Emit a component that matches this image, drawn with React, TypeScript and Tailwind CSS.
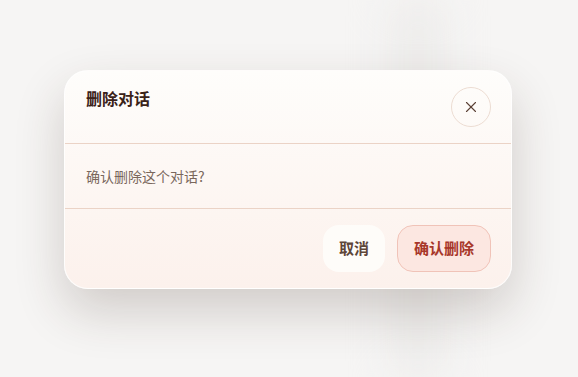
import { X } from 'lucide-react'

export default function App() {
  return (
    <div
      className="relative w-[578px] h-[377px] overflow-hidden bg-[#f4f3f2] flex items-center justify-center"
      style={{ fontFamily: '"Noto Sans CJK SC", "Noto Sans", sans-serif' }}
    >
      {/* blurred backdrop */}
      <div className="absolute left-[398px] top-0 w-[40px] h-full bg-[#e5e3e1] blur-xl" />
      <div className="absolute inset-0 bg-white/20" />

      <div className="relative w-[448px] rounded-[24px] overflow-hidden bg-gradient-to-b from-[#fefdfb] to-[#fcf1ec] shadow-[0_22px_50px_rgba(60,40,30,0.2)] border border-white/80 -mt-[18px] -ml-[2px]">
        {/* header */}
        <div className="flex items-start justify-between pl-[21px] pr-[20px] pt-[16px] pb-[16px] border-b border-[#ebd3c6]">
          <h3 className="text-[16px] leading-[24px] font-bold text-[#3a2218] -mt-[1px]">删除对话</h3>
          <button className="w-[40px] h-[40px] rounded-full border border-[#ecdcd2] flex items-center justify-center text-[#5a4034]">
            <X className="w-[18px] h-[18px]" strokeWidth={1.5} />
          </button>
        </div>

        {/* body */}
        <div className="px-[21px] py-[22px] border-b border-[#ebd3c6]">
          <p className="text-[14px] leading-[20px] text-[#7a675c]">确认删除这个对话?</p>
        </div>

        {/* footer */}
        <div className="flex justify-end gap-[12px] pt-[16px] pb-[16px] pr-[20px]">
          <button className="h-[47px] px-[16px] rounded-[16px] bg-[#fefcf9] text-[15px] font-bold text-[#5e4639]">
            取消
          </button>
          <button className="h-[47px] px-[16px] rounded-[16px] bg-[#fce7e1] border border-[#f0c3b8] text-[15px] font-bold text-[#a8382a]">
            确认删除
          </button>
        </div>
      </div>
    </div>
  )
}
